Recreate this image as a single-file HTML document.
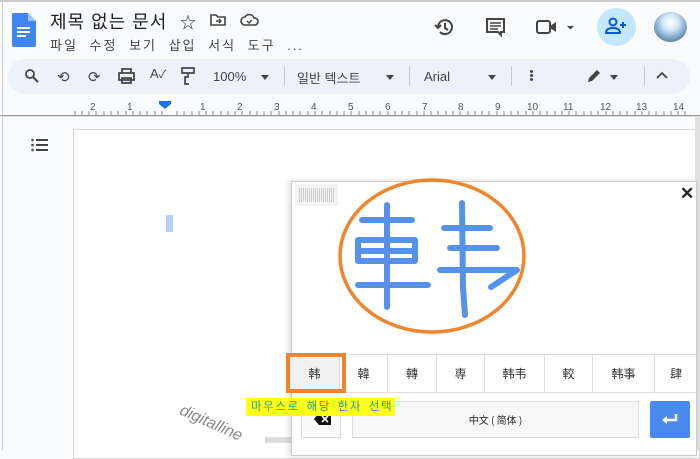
<!DOCTYPE html>
<html><head><meta charset="utf-8"><style>
*{margin:0;padding:0;box-sizing:border-box}
body{width:700px;height:450px;overflow:hidden;background:#f9fbfd;font-family:"Liberation Sans","Noto Sans CJK KR",sans-serif;position:relative;color:#1f1f1f}
.a{position:absolute}
.t{font-size:13px;color:#444}
.cell{position:absolute;top:355px;height:37px;border-right:1px solid #ddd;font-size:12px;text-align:center;line-height:37px;color:#333;font-family:"Noto Sans CJK SC",sans-serif}
</style></head><body>
<div class="a" style="left:0;top:0;width:700px;height:2px;background:#ccc"></div>
<div class="a" style="left:2px;top:0;width:1px;height:450px;background:#ccc"></div>
<svg class="a" style="left:12px;top:13px" width="24" height="34" viewBox="0 0 24 34"><path d="M2 0h14l8 8v24a2 2 0 0 1-2 2H2a2 2 0 0 1-2-2V2a2 2 0 0 1 2-2z" fill="#4285f4"/><path d="M16 0v8h8z" fill="#a1c2fa"/><rect x="5" y="14" width="13" height="2" fill="#fff"/><rect x="5" y="18" width="13" height="2" fill="#fff"/><rect x="5" y="22" width="9" height="2" fill="#fff"/></svg>
<div class="a" style="left:50px;top:8px;font-size:18px;color:#1f1f1f;letter-spacing:1px">제목 없는 문서</div>
<div class="a" style="left:180px;top:9px;font-size:16px;color:#333">☆</div>
<svg class="a" style="left:210px;top:13px" width="16" height="13"><path d="M1 2h5l2 2h7v8H1z" fill="none" stroke="#444" stroke-width="1.6"/><path d="M6 8h5M9 6l2 2-2 2" fill="none" stroke="#444" stroke-width="1.4"/></svg>
<svg class="a" style="left:240px;top:13px" width="20" height="13"><path d="M5 12a4 4 0 0 1 0-8 5 5 0 0 1 9 1 3.5 3.5 0 0 1 1 7z" fill="none" stroke="#444" stroke-width="1.6"/><path d="M7 8l2 2 3-3" fill="none" stroke="#444" stroke-width="1.4"/></svg>
<div class="a t" style="left:50px;top:35px;letter-spacing:2px;word-spacing:6px">파일 수정 보기 삽입 서식 도구 ...</div>
<svg class="a" style="left:434px;top:16px" width="22" height="22" viewBox="0 0 22 22"><path d="M4 11a7 7 0 1 1 2 5" fill="none" stroke="#444" stroke-width="2"/><path d="M1 9l3 3 3-3" fill="none" stroke="#444" stroke-width="2"/><path d="M11 7v5l3 2" fill="none" stroke="#444" stroke-width="2"/></svg>
<svg class="a" style="left:485px;top:17px" width="22" height="20"><path d="M2 2h17v13h-3v3l-3-3H2z" fill="none" stroke="#444" stroke-width="2"/><path d="M5 6h11M5 9h11M5 12h8" stroke="#444" stroke-width="1.6"/></svg>
<svg class="a" style="left:536px;top:19px" width="40" height="16"><rect x="1" y="2" width="13" height="12" rx="2" fill="none" stroke="#444" stroke-width="2"/><path d="M14 7l6-4v10l-6-4z" fill="#444"/><path d="M31 7h7l-3.5 3.5z" fill="#444"/></svg>
<div class="a" style="left:597px;top:8px;width:39px;height:38px;border-radius:50%;background:#c2e7ff"></div>
<svg class="a" style="left:605px;top:17px" width="22" height="18"><circle cx="8" cy="5" r="3.5" fill="none" stroke="#0b57d0" stroke-width="2"/><path d="M1 16c0-4 3-5 7-5s7 1 7 5z" fill="none" stroke="#0b57d0" stroke-width="2"/><path d="M18 5v6M15 8h6" stroke="#0b57d0" stroke-width="2"/></svg>
<div class="a" style="left:654px;top:12px;width:33px;height:30px;border-radius:50%;background:radial-gradient(circle at 50% 35%,#fff 0,#d6e8f8 30%,#7fa9cf 60%,#5c7a60 85%)"></div>
<div class="a" style="left:8px;top:59px;width:682px;height:35px;border-radius:18px;background:#edf2fa"></div>
<svg class="a" style="left:24px;top:68px" width="16" height="16"><circle cx="6" cy="6" r="4" fill="none" stroke="#444" stroke-width="1.8"/><path d="M9 9l5 5" stroke="#444" stroke-width="2"/></svg>
<div class="a" style="left:57px;top:68px;font-size:15px;color:#444">⟲</div>
<div class="a" style="left:88px;top:68px;font-size:15px;color:#444">⟳</div>
<svg class="a" style="left:118px;top:68px" width="17" height="16"><path d="M4 1h9v4H4zM1 5h15v7H1zM4 10h9v5H4z" fill="none" stroke="#444" stroke-width="1.8"/></svg>
<div class="a" style="left:150px;top:66px;font-size:13px;color:#444">A<span style="font-size:11px">✓</span></div>
<svg class="a" style="left:181px;top:67px" width="14" height="18"><path d="M1 1h12v5H1zM7 6v4H4v7h4" fill="none" stroke="#444" stroke-width="1.7"/></svg>
<div class="a t" style="left:213px;top:69px">100%</div>
<div class="a" style="left:261px;top:75px;border:4px solid transparent;border-top:5px solid #444"></div>
<div class="a" style="left:284px;top:66px;width:1px;height:20px;background:#c7c7c7"></div>
<div class="a t" style="left:297px;top:68px">일반 텍스트</div>
<div class="a" style="left:386px;top:75px;border:4px solid transparent;border-top:5px solid #444"></div>
<div class="a" style="left:409px;top:66px;width:1px;height:20px;background:#c7c7c7"></div>
<div class="a t" style="left:424px;top:69px">Arial</div>
<div class="a" style="left:488px;top:75px;border:4px solid transparent;border-top:5px solid #444"></div>
<div class="a" style="left:511px;top:66px;width:1px;height:20px;background:#c7c7c7"></div>
<div class="a" style="left:530px;top:70px;width:3px;height:3px;background:#444;border-radius:50%;box-shadow:0 4px 0 #444,0 8px 0 #444"></div>
<svg class="a" style="left:586px;top:68px" width="16" height="16"><path d="M2 14l1-4 8-8 3 3-8 8z" fill="#444"/></svg>
<div class="a" style="left:610px;top:75px;border:4px solid transparent;border-top:5px solid #444"></div>
<div class="a" style="left:644px;top:66px;width:1px;height:20px;background:#c7c7c7"></div>
<svg class="a" style="left:656px;top:71px" width="12" height="8"><path d="M1 7l5-5 5 5" fill="none" stroke="#444" stroke-width="1.8"/></svg>
<svg class="a" style="left:0;top:98px" width="700" height="18">
<g stroke="#888" stroke-width="1">
<path d="M75 17v-4M82 17v-4M89 17v-4M96 17v-4M104 17v-4M111 17v-4M118 17v-4M126 17v-4M133 17v-4M140 17v-4M147 17v-4M155 17v-4M162 17v-4M177 17v-4M184 17v-4M192 17v-4M199 17v-4M206 17v-4M213 17v-4M221 17v-4M228 17v-4M235 17v-4M242 17v-4M250 17v-4M257 17v-4M264 17v-4M271 17v-4M279 17v-4M286 17v-4M293 17v-4M300 17v-4M308 17v-4M315 17v-4M322 17v-4M330 17v-4M337 17v-4M344 17v-4M351 17v-4M359 17v-4M366 17v-4M373 17v-4M380 17v-4M388 17v-4M395 17v-4M402 17v-4M409 17v-4M417 17v-4M424 17v-4M431 17v-4M438 17v-4M446 17v-4M453 17v-4M460 17v-4M468 17v-4M475 17v-4M482 17v-4M489 17v-4M497 17v-4M504 17v-4M511 17v-4M518 17v-4M526 17v-4M533 17v-4M540 17v-4M547 17v-4M555 17v-4M562 17v-4M569 17v-4M576 17v-4M584 17v-4M591 17v-4M598 17v-4M606 17v-4M613 17v-4M620 17v-4M627 17v-4M635 17v-4M642 17v-4M649 17v-4M656 17v-4M664 17v-4M671 17v-4M678 17v-4M685 17v-4"/>
<path d="M0 17.5h700" stroke="#999"/></g>
<g font-size="10" fill="#555" font-family="Liberation Sans">
<text x="90" y="12">2</text><text x="127" y="12">1</text><text x="200" y="12">1</text><text x="237" y="12">2</text><text x="274" y="12">3</text><text x="311" y="12">4</text><text x="348" y="12">5</text><text x="385" y="12">6</text><text x="422" y="12">7</text><text x="458" y="12">8</text><text x="495" y="12">9</text><text x="527" y="12">10</text><text x="563" y="12">11</text><text x="600" y="12">12</text><text x="636" y="12">13</text><text x="673" y="12">14</text></g>
<path d="M159 3h12v3l-6 5-6-5z" fill="#1a73e8"/></svg>
<div class="a" style="left:3px;top:116px;width:697px;height:334px;background:#f9fbfd;border-top:1px solid #ddd"></div>
<div class="a" style="left:73px;top:129px;width:627px;height:330px;background:#fff;border:1px solid #d5d5d5"></div>
<div class="a" style="left:695px;top:116px;width:5px;height:334px;background:#e0e0e0"></div>
<svg class="a" style="left:31px;top:138px" width="18" height="14"><g fill="#444"><circle cx="1.5" cy="2" r="1.3"/><circle cx="1.5" cy="7" r="1.3"/><circle cx="1.5" cy="12" r="1.3"/><rect x="5" y="1" width="12" height="2"/><rect x="5" y="6" width="12" height="2"/><rect x="5" y="11" width="12" height="2"/></g></svg>
<div class="a" style="left:166px;top:215px;width:7px;height:17px;background:#b7d0f5"></div>
<div class="a" style="left:184px;top:402px;font-size:16px;font-style:italic;color:#888;transform:rotate(24deg);transform-origin:0 0">digitalline</div>
<div class="a" style="left:265px;top:437px;width:30px;height:6px;background:#ddd"></div>
<div class="a" style="left:291px;top:181px;width:406px;height:275px;background:#fff;border:1px solid #ccc;box-shadow:-2px 0 6px rgba(0,0,0,.15)"></div>
<div class="a" style="left:295px;top:184px;width:43px;height:22px;background:#f3f3f3"></div>
<div class="a" style="left:299px;top:188px;width:35px;height:14px;background:repeating-linear-gradient(90deg,#ccc 0 1px,transparent 1px 2px)"></div>
<div class="a" style="left:680px;top:184px;font-size:17px;font-weight:bold;color:#222">✕</div>
<svg class="a" style="left:0;top:0" width="700" height="450">
<ellipse cx="432" cy="256" rx="92" ry="76" fill="none" stroke="#f0852d" stroke-width="3.5"/>
<g fill="none" stroke="#5592ec" stroke-width="6" stroke-linecap="round" stroke-linejoin="round">
<path d="M387 205v102M362 220h50M358 240h57v21h-57zM359 251h55M358 285h70"/>
<path d="M462 203l1 85 2 27M444 228h46M450 248h47M440 270h77l-26 17"/></g></svg>
<div class="a" style="left:291px;top:354px;width:406px;height:1px;background:#ddd"></div>
<div class="a" style="left:291px;top:392px;width:406px;height:1px;background:#ddd"></div>
<div class="cell" style="left:290px;width:50px;background:#f1f1f1">韩</div>
<div class="cell" style="left:340px;width:48px">韓</div>
<div class="cell" style="left:388px;width:49px">轉</div>
<div class="cell" style="left:437px;width:48px">専</div>
<div class="cell" style="left:485px;width:60px">韩韦</div>
<div class="cell" style="left:545px;width:48px">較</div>
<div class="cell" style="left:593px;width:62px">韩事</div>
<div class="cell" style="left:655px;width:42px;border:none">肆</div>
<div class="a" style="left:286px;top:353px;width:60px;height:40px;border:4px solid #f0852d"></div>
<div class="a" style="left:301px;top:401px;width:40px;height:37px;border:1px solid #ddd;background:#fafafa"></div>
<svg class="a" style="left:314px;top:412px" width="18" height="14"><path d="M5 1h12v12H5L0 7z" fill="#111"/><path d="M8 4l6 6M14 4l-6 6" stroke="#fff" stroke-width="1.6"/></svg>
<div class="a" style="left:352px;top:401px;width:287px;height:37px;border:1px solid #ddd;background:#f8f8f8;text-align:center;line-height:36px;font-size:10px;color:#222;font-family:'Noto Sans CJK SC',sans-serif">中文 ( 简体 )</div>
<div class="a" style="left:650px;top:401px;width:40px;height:37px;background:#4a8af0;border-radius:2px"></div>
<svg class="a" style="left:661px;top:412px" width="18" height="14"><path d="M15 2v6H4" fill="none" stroke="#fff" stroke-width="2.4"/><path d="M1 8l5-4v8z" fill="#fff"/></svg>
<div class="a" style="left:246px;top:398px;width:149px;height:18px;background:#ffff1a;font-size:11.5px;line-height:18px;color:#21a08a;padding-left:5px;letter-spacing:1.6px;word-spacing:2px">마우스로 해당 한자 선택</div>
</body></html>
